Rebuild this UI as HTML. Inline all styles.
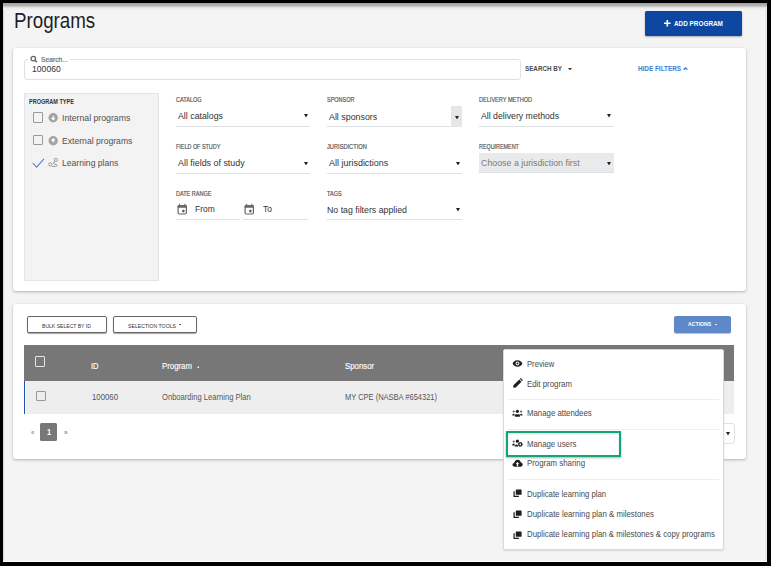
<!DOCTYPE html>
<html><head><meta charset="utf-8"><style>
html,body{margin:0;padding:0;}
body{width:771px;height:566px;background:#000;position:relative;overflow:hidden;font-family:"Liberation Sans",sans-serif;}
.t{position:absolute;white-space:nowrap;transform-origin:0 0;}
.b{position:absolute;display:block;}
</style></head><body>
<div class="b" style="left:3px;top:3px;width:764px;height:559px;background:linear-gradient(to bottom,#9c9c9c 0px,#acacac 1.5px,#b2b2b2 2.5px,#cacaca 3.5px,#e0e0e0 4.5px,#ececec 5.5px,#f1f1f1 6.5px,#f4f4f4 8px);"></div>
<div class="b" style="left:3px;top:10px;width:1px;height:551px;background:#dcdcdc;"></div>
<div class="b" style="left:4px;top:10px;width:1px;height:551px;background:#ececec;"></div>
<div class="b" style="left:765px;top:8px;width:2px;height:553px;background:#e9e9e9;"></div>
<div class="b" style="left:3px;top:561px;width:764px;height:1px;background:#fff;"></div>
<div class="t" style="left:14.00px;top:8.96px;font-size:22.97px;line-height:22.97px;color:#1e1e2a;transform:scaleX(0.816);">Programs</div>
<div class="b" style="left:645px;top:11px;width:97px;height:25px;background:#0d47a1;border-radius:1.5px;box-shadow:0 1px 2px rgba(0,0,0,.3);"></div>
<svg class="b" style="left:664.0px;top:20.1px;" width="6.6" height="6.6" viewBox="0 0 10 10" preserveAspectRatio="none"><path d="M5 0V10M0 5H10" stroke="#fff" stroke-width="2.5"/></svg>
<div class="t" style="left:674.40px;top:20.23px;font-size:7.99px;line-height:7.99px;color:#fff;font-weight:bold;transform:scaleX(0.799);">ADD PROGRAM</div>
<div class="b" style="left:13px;top:48px;width:733px;height:243px;background:#fff;border-radius:3px;box-shadow:0 1px 3px rgba(0,0,0,.28);"></div>
<div class="b" style="left:24px;top:58.5px;width:496.5px;height:21.0px;border:1px solid #dfe1e4;border-radius:3px;box-sizing:border-box;"></div>
<div class="b" style="left:27.5px;top:57px;width:42.5px;height:4px;background:#fff;"></div>
<svg class="b" style="left:25px;top:51.3px" width="14" height="14" viewBox="0 0 14 14"><circle cx="8.3" cy="7.6" r="2.3" fill="none" stroke="#666" stroke-width="1.3"/><path d="M9.9 9.3L11.8 11.2" stroke="#666" stroke-width="1.5"/></svg>
<div class="t" style="left:41.00px;top:56.97px;font-size:7.12px;line-height:7.12px;color:#666;transform:scaleX(0.947);-webkit-text-stroke:0.15px #666;">Search...</div>
<div class="t" style="left:31.60px;top:65.07px;font-size:9.01px;line-height:9.01px;color:#333;transform:scaleX(0.958);">100060</div>
<div class="t" style="left:525.00px;top:65.97px;font-size:7.12px;line-height:7.12px;color:#4a4a4a;font-weight:bold;transform:scaleX(0.882);">SEARCH BY</div>
<svg class="b" style="left:567.8px;top:67.5px;" width="4.0" height="2.7" viewBox="0 0 10 6" preserveAspectRatio="none"><path d="M0 0H10L5 6Z" fill="#444"/></svg>
<div class="t" style="left:638.00px;top:65.08px;font-size:7.70px;line-height:7.70px;color:#3d7bd6;font-weight:bold;transform:scaleX(0.828);">HIDE FILTERS</div>
<svg class="b" style="left:683px;top:66.6px;" width="5" height="3.2" viewBox="0 0 10 7" preserveAspectRatio="none"><path d="M1.3 5.8L5 2.2L8.7 5.8" fill="none" stroke="#3d7bd6" stroke-width="2.8"/></svg>
<div class="b" style="left:24px;top:93px;width:135px;height:187.8px;background:#f3f3f3;border:1px solid #e4e5e7;box-sizing:border-box;"></div>
<div class="t" style="left:29.00px;top:99.37px;font-size:7.12px;line-height:7.12px;color:#333;font-weight:bold;transform:scaleX(0.779);">PROGRAM TYPE</div>
<div class="b" style="left:33.2px;top:112.4px;width:10.0px;height:10.2px;border:1.2px solid #999;border-radius:1px;box-sizing:border-box;"></div>
<div class="b" style="left:33.2px;top:135.3px;width:10.0px;height:10.2px;border:1.2px solid #999;border-radius:1px;box-sizing:border-box;"></div>
<svg class="b" style="left:45px;top:110px" width="16" height="16" viewBox="0 0 16 16"><circle cx="8.2" cy="7.7" r="4.7" fill="#a3a3a3"/><path d="M8.2 5.8V9.2M6.6 7.9L8.2 9.6L9.8 7.9" fill="none" stroke="#fff" stroke-width="1.2"/></svg>
<svg class="b" style="left:45px;top:133px" width="16" height="16" viewBox="0 0 16 16"><circle cx="8.2" cy="7.7" r="4.7" fill="#a3a3a3"/><path d="M8.2 9.6V6.2M6.6 7.5L8.2 5.8L9.8 7.5" fill="none" stroke="#fff" stroke-width="1.2"/></svg>
<svg class="b" style="left:32.3px;top:158.2px;" width="12.7" height="10.0" viewBox="0 0 13 10" preserveAspectRatio="none"><path d="M0.7 5L4.7 9.2L12.3 0.8" fill="none" stroke="#5479cc" stroke-width="1.05"/></svg>
<svg class="b" style="left:45px;top:155px" width="16" height="16" viewBox="0 0 16 16"><circle cx="10.9" cy="4.9" r="1.6" fill="none" stroke="#999" stroke-width="1.0"/><circle cx="5.2" cy="9.4" r="1.6" fill="none" stroke="#999" stroke-width="1.0"/><path d="M10.2 6.6Q8 7.4 8.4 8.4Q8.8 9.1 11 9.4Q12.3 9.7 12.1 10.7Q11.8 11.4 10.6 11.4L6.9 11.4" fill="none" stroke="#999" stroke-width="1.0"/></svg>
<div class="t" style="left:61.90px;top:112.70px;font-size:9.45px;line-height:9.45px;color:#505050;transform:scaleX(0.924);">Internal programs</div>
<div class="t" style="left:61.90px;top:135.80px;font-size:9.45px;line-height:9.45px;color:#505050;transform:scaleX(0.913);">External programs</div>
<div class="t" style="left:61.90px;top:158.10px;font-size:9.45px;line-height:9.45px;color:#505050;transform:scaleX(0.910);">Learning plans</div>
<div class="t" style="left:175.80px;top:97.16px;font-size:6.54px;line-height:6.54px;color:#555;transform:scaleX(0.849);-webkit-text-stroke:0.18px #555;">CATALOG</div>
<div class="t" style="left:327.20px;top:97.16px;font-size:6.54px;line-height:6.54px;color:#555;transform:scaleX(0.838);-webkit-text-stroke:0.18px #555;">SPONSOR</div>
<div class="t" style="left:478.75px;top:97.16px;font-size:6.54px;line-height:6.54px;color:#555;transform:scaleX(0.854);-webkit-text-stroke:0.18px #555;">DELIVERY METHOD</div>
<div class="t" style="left:175.80px;top:144.16px;font-size:6.54px;line-height:6.54px;color:#555;transform:scaleX(0.831);-webkit-text-stroke:0.18px #555;">FIELD OF STUDY</div>
<div class="t" style="left:327.20px;top:144.16px;font-size:6.54px;line-height:6.54px;color:#555;transform:scaleX(0.871);-webkit-text-stroke:0.18px #555;">JURISDICTION</div>
<div class="t" style="left:478.75px;top:144.16px;font-size:6.54px;line-height:6.54px;color:#555;transform:scaleX(0.826);-webkit-text-stroke:0.18px #555;">REQUIREMENT</div>
<div class="t" style="left:175.80px;top:190.76px;font-size:6.54px;line-height:6.54px;color:#555;transform:scaleX(0.842);-webkit-text-stroke:0.18px #555;">DATE RANGE</div>
<div class="t" style="left:327.20px;top:190.76px;font-size:6.54px;line-height:6.54px;color:#555;transform:scaleX(0.843);-webkit-text-stroke:0.18px #555;">TAGS</div>
<div class="b" style="left:175.8px;top:126px;width:134.2px;height:1px;background:#dde1e6;"></div>
<div class="b" style="left:175.8px;top:172.6px;width:134.2px;height:1.0px;background:#dde1e6;"></div>
<div class="b" style="left:327px;top:126px;width:124.2px;height:1px;background:#dde1e6;"></div>
<div class="b" style="left:327px;top:172.6px;width:134.6px;height:1.0px;background:#dde1e6;"></div>
<div class="b" style="left:478.75px;top:126px;width:134.85px;height:1px;background:#dde1e6;"></div>
<div class="b" style="left:175.8px;top:218.8px;width:64.6px;height:1.0px;background:#dde1e6;"></div>
<div class="b" style="left:243px;top:218.8px;width:65px;height:1.0px;background:#dde1e6;"></div>
<div class="b" style="left:327px;top:218.8px;width:134.6px;height:1.0px;background:#dde1e6;"></div>
<div class="b" style="left:451.2px;top:106px;width:10.7px;height:20.8px;background:#e6e6e6;"></div>
<div class="b" style="left:478.75px;top:153.2px;width:135.25px;height:19.8px;background:#e9eaeb;border-bottom:1px solid #dde1e6;box-sizing:border-box;"></div>
<svg class="b" style="left:303.6px;top:114.1px;" width="4.0" height="3.5" viewBox="0 0 10 8" preserveAspectRatio="none"><path d="M0 0H10L5 8Z" fill="#222"/></svg>
<svg class="b" style="left:454.6px;top:115.6px;" width="4.0" height="3.5" viewBox="0 0 10 8" preserveAspectRatio="none"><path d="M0 0H10L5 8Z" fill="#222"/></svg>
<svg class="b" style="left:606.8px;top:114.1px;" width="4.0" height="3.5" viewBox="0 0 10 8" preserveAspectRatio="none"><path d="M0 0H10L5 8Z" fill="#222"/></svg>
<svg class="b" style="left:303.6px;top:161.5px;" width="4.0" height="3.5" viewBox="0 0 10 8" preserveAspectRatio="none"><path d="M0 0H10L5 8Z" fill="#222"/></svg>
<svg class="b" style="left:456.4px;top:161.5px;" width="4.0" height="3.5" viewBox="0 0 10 8" preserveAspectRatio="none"><path d="M0 0H10L5 8Z" fill="#222"/></svg>
<svg class="b" style="left:606.8px;top:161.6px;" width="4.0" height="3.5" viewBox="0 0 10 8" preserveAspectRatio="none"><path d="M0 0H10L5 8Z" fill="#222"/></svg>
<svg class="b" style="left:456px;top:208.2px;" width="4" height="3.5" viewBox="0 0 10 8" preserveAspectRatio="none"><path d="M0 0H10L5 8Z" fill="#222"/></svg>
<div class="t" style="left:177.80px;top:111.48px;font-size:9.59px;line-height:9.59px;color:#333;transform:scaleX(0.919);">All catalogs</div>
<div class="t" style="left:329.10px;top:112.48px;font-size:9.59px;line-height:9.59px;color:#333;transform:scaleX(0.924);">All sponsors</div>
<div class="t" style="left:480.70px;top:111.48px;font-size:9.59px;line-height:9.59px;color:#333;transform:scaleX(0.911);">All delivery methods</div>
<div class="t" style="left:177.80px;top:158.18px;font-size:9.59px;line-height:9.59px;color:#333;transform:scaleX(0.927);">All fields of study</div>
<div class="t" style="left:329.10px;top:158.18px;font-size:9.59px;line-height:9.59px;color:#333;transform:scaleX(0.936);">All jurisdictions</div>
<div class="t" style="left:480.70px;top:158.18px;font-size:9.59px;line-height:9.59px;color:#7a7a7a;transform:scaleX(0.922);">Choose a jurisdiction first</div>
<div class="t" style="left:195.30px;top:205.13px;font-size:9.30px;line-height:9.30px;color:#333;transform:scaleX(0.908);">From</div>
<div class="t" style="left:263.00px;top:205.13px;font-size:9.30px;line-height:9.30px;color:#333;transform:scaleX(0.916);">To</div>
<div class="t" style="left:327.20px;top:204.88px;font-size:9.59px;line-height:9.59px;color:#333;transform:scaleX(0.915);">No tag filters applied</div>
<svg class="b" style="left:174px;top:200px" width="18" height="18" viewBox="0 0 18 18"><rect x="4.1" y="5.9" width="8.3" height="8.1" rx="1.2" fill="none" stroke="#666" stroke-width="1.2"/><rect x="3.5" y="5.3" width="9.5" height="2.4" rx="0.8" fill="#666"/><rect x="5" y="3.8" width="1.1" height="2" fill="#666"/><rect x="10.3" y="3.8" width="1.1" height="2" fill="#666"/><circle cx="9.4" cy="11.1" r="1.3" fill="#555"/></svg>
<svg class="b" style="left:240.8px;top:200px" width="18" height="18" viewBox="0 0 18 18"><rect x="4.1" y="5.9" width="8.3" height="8.1" rx="1.2" fill="none" stroke="#666" stroke-width="1.2"/><rect x="3.5" y="5.3" width="9.5" height="2.4" rx="0.8" fill="#666"/><rect x="5" y="3.8" width="1.1" height="2" fill="#666"/><rect x="10.3" y="3.8" width="1.1" height="2" fill="#666"/><circle cx="9.4" cy="11.1" r="1.3" fill="#555"/></svg>
<div class="b" style="left:13px;top:304.2px;width:733px;height:154.8px;background:#fff;border-radius:3px;box-shadow:0 1px 3px rgba(0,0,0,.28);"></div>
<div class="b" style="left:27.2px;top:316px;width:79.4px;height:17px;border:1px solid #666;border-radius:2px;box-sizing:border-box;box-shadow:0 1px 1px rgba(0,0,0,.35);background:#fff;"></div>
<div class="b" style="left:112.6px;top:316px;width:84.4px;height:17px;border:1px solid #666;border-radius:2px;box-sizing:border-box;box-shadow:0 1px 1px rgba(0,0,0,.35);background:#fff;"></div>
<div class="t" style="left:42.20px;top:322.73px;font-size:6.10px;line-height:6.10px;color:#333;transform:scaleX(0.833);">BULK SELECT BY ID</div>
<div class="t" style="left:127.70px;top:322.73px;font-size:6.10px;line-height:6.10px;color:#333;transform:scaleX(0.846);">SELECTION TOOLS</div>
<svg class="b" style="left:178.7px;top:323.6px;" width="2.8" height="1.6" viewBox="0 0 10 6" preserveAspectRatio="none"><path d="M0 0H10L5 6Z" fill="#333"/></svg>
<div class="b" style="left:674px;top:316px;width:57px;height:17px;background:#5f88c8;border-radius:2px;box-shadow:0 1px 1px rgba(0,0,0,.25);"></div>
<div class="t" style="left:687.90px;top:322.16px;font-size:5.96px;line-height:5.96px;color:#fff;font-weight:bold;transform:scaleX(0.869);">ACTIONS</div>
<svg class="b" style="left:714.9px;top:324px;" width="2.4" height="1.6" viewBox="0 0 10 6" preserveAspectRatio="none"><path d="M0 0H10L5 6Z" fill="#fff"/></svg>
<div class="b" style="left:24px;top:345.4px;width:710px;height:35.6px;background:#777;"></div>
<div class="b" style="left:24px;top:381px;width:710px;height:32.6px;background:#eeeeee;"></div>
<div class="b" style="left:24px;top:381px;width:1.3px;height:32.6px;background:#1f4fb0;"></div>
<div class="b" style="left:25.3px;top:381px;width:1.0px;height:32.6px;background:#fafafa;"></div>
<div class="b" style="left:34.5px;top:356px;width:10.3px;height:10.7px;border:1.3px solid #e6e6e6;border-radius:1px;box-sizing:border-box;"></div>
<div class="b" style="left:35.8px;top:391.4px;width:10.2px;height:10.0px;border:1.2px solid #9a9a9a;border-radius:1px;box-sizing:border-box;"></div>
<div class="t" style="left:91.40px;top:360.60px;font-size:9.45px;line-height:9.45px;color:#fff;transform:scaleX(0.804);-webkit-text-stroke:0.15px #fff;">ID</div>
<div class="t" style="left:162.00px;top:360.60px;font-size:9.45px;line-height:9.45px;color:#fff;transform:scaleX(0.828);-webkit-text-stroke:0.15px #fff;">Program</div>
<svg class="b" style="left:196.5px;top:365.7px;" width="2.8" height="2.3" viewBox="0 0 10 8" preserveAspectRatio="none"><path d="M0 8H10L5 0Z" fill="#fff"/></svg>
<div class="t" style="left:344.50px;top:360.60px;font-size:9.45px;line-height:9.45px;color:#fff;transform:scaleX(0.827);-webkit-text-stroke:0.15px #fff;">Sponsor</div>
<div class="t" style="left:91.70px;top:392.18px;font-size:9.59px;line-height:9.59px;color:#555;transform:scaleX(0.815);">100060</div>
<div class="t" style="left:162.20px;top:392.18px;font-size:9.59px;line-height:9.59px;color:#555;transform:scaleX(0.793);">Onboarding Learning Plan</div>
<div class="t" style="left:344.80px;top:392.18px;font-size:9.59px;line-height:9.59px;color:#555;transform:scaleX(0.783);">MY CPE (NASBA #654321)</div>
<div class="t" style="left:30.70px;top:429.64px;font-size:6.69px;line-height:6.69px;color:#8797ad;font-weight:bold;transform:scaleX(0.888);">«</div>
<div class="b" style="left:40.4px;top:423px;width:16.6px;height:17.7px;background:#777;border-radius:1.5px;"></div>
<div class="t" style="left:46.80px;top:427.93px;font-size:9.30px;line-height:9.30px;color:#fff;font-weight:bold;transform:scaleX(0.793);">1</div>
<div class="t" style="left:64.00px;top:429.64px;font-size:6.69px;line-height:6.69px;color:#8797ad;font-weight:bold;transform:scaleX(0.995);">»</div>
<div class="b" style="left:690px;top:422.6px;width:44.9px;height:21.3px;border:1px solid #dde0e4;border-radius:3px;box-sizing:border-box;background:#fff;"></div>
<svg class="b" style="left:726px;top:432px;" width="4" height="3.5" viewBox="0 0 10 8" preserveAspectRatio="none"><path d="M0 0H10L5 8Z" fill="#222"/></svg>
<div class="b" style="left:503.1px;top:349.2px;width:221.1px;height:200.4px;background:#fff;border:1px solid #dadada;border-radius:2px;box-sizing:border-box;box-shadow:0 1px 2px rgba(0,0,0,.12);"></div>
<div class="b" style="left:507.7px;top:399px;width:211.0px;height:1px;background:#eceef0;"></div>
<div class="b" style="left:507.7px;top:428.5px;width:211.0px;height:1.0px;background:#eceef0;"></div>
<div class="b" style="left:507.7px;top:478.8px;width:211.0px;height:1.0px;background:#eceef0;"></div>
<div class="t" style="left:526.80px;top:359.63px;font-size:9.30px;line-height:9.30px;color:#4a4a4a;transform:scaleX(0.824);">Preview</div>
<div class="t" style="left:526.80px;top:380.33px;font-size:9.30px;line-height:9.30px;color:#4a4a4a;transform:scaleX(0.845);">Edit program</div>
<div class="t" style="left:526.80px;top:409.23px;font-size:9.30px;line-height:9.30px;color:#4a4a4a;transform:scaleX(0.840);">Manage attendees</div>
<div class="t" style="left:526.80px;top:439.83px;font-size:9.30px;line-height:9.30px;color:#4a4a4a;transform:scaleX(0.838);">Manage users</div>
<div class="t" style="left:526.80px;top:459.23px;font-size:9.30px;line-height:9.30px;color:#4a4a4a;transform:scaleX(0.845);">Program sharing</div>
<div class="t" style="left:526.80px;top:489.73px;font-size:9.30px;line-height:9.30px;color:#4a4a4a;transform:scaleX(0.837);">Duplicate learning plan</div>
<div class="t" style="left:526.80px;top:509.93px;font-size:9.30px;line-height:9.30px;color:#4a4a4a;transform:scaleX(0.844);">Duplicate learning plan &amp; milestones</div>
<div class="t" style="left:526.80px;top:530.33px;font-size:9.30px;line-height:9.30px;color:#4a4a4a;transform:scaleX(0.842);">Duplicate learning plan &amp; milestones &amp; copy programs</div>
<svg class="b" style="left:509px;top:356px" width="18" height="18" viewBox="0 0 18 18"><path d="M8.5 4.2C6 4.2 4.3 5.8 3.6 7.5C4.3 9.2 6 10.8 8.5 10.8C11 10.8 12.7 9.2 13.4 7.5C12.7 5.8 11 4.2 8.5 4.2Z" fill="#1e1e1e"/><circle cx="8.5" cy="7.5" r="1.9" fill="#fff"/><circle cx="8.5" cy="7.5" r="1" fill="#1e1e1e"/></svg>
<svg class="b" style="left:509px;top:376px" width="18" height="18" viewBox="0 0 18 18"><path d="M4.2 11.8L4.5 9.3L10.3 3.5L12.5 5.7L6.7 11.5Z" fill="#1e1e1e"/><path d="M10.9 2.9L11.7 2.1L13.9 4.3L13.1 5.1Z" fill="#1e1e1e"/></svg>
<svg class="b" style="left:509px;top:404px" width="18" height="18" viewBox="0 0 18 18"><circle cx="8.4" cy="7.3" r="1.6" fill="#1e1e1e"/><path d="M5.9 12.7V11.2Q5.9 10.2 7 10.2H9.8Q10.9 10.2 10.9 11.2V12.7Z" fill="#1e1e1e"/><circle cx="4.7" cy="7.6" r="1.1" fill="#666"/><circle cx="12.1" cy="7.6" r="1.1" fill="#666"/><path d="M3.2 11.6Q3.2 9.7 4.6 9.7Q5.6 9.7 5.6 10.6V11.6Z M13.6 11.6Q13.6 9.7 12.2 9.7Q11.2 9.7 11.2 10.6V11.6Z" fill="#1e1e1e"/></svg>
<svg class="b" style="left:509px;top:434px" width="18" height="18" viewBox="0 0 18 18"><circle cx="8.4" cy="7.2" r="1.6" fill="#1e1e1e"/><path d="M5.6 12.6Q5.6 10.4 7.3 10.4Q8.6 10.4 9 11.4V12.6Z" fill="#1e1e1e"/><circle cx="4.7" cy="7.6" r="1.1" fill="#666"/><path d="M3.2 11.4Q3.2 9.6 4.5 9.6Q5.3 9.6 5.6 10.2V11.4Z" fill="#1e1e1e"/><circle cx="11.3" cy="10.4" r="1.5" fill="none" stroke="#1e1e1e" stroke-width="1.3"/><circle cx="11.3" cy="10.4" r="2.1" fill="none" stroke="#1e1e1e" stroke-width="0.7" stroke-dasharray="0.9 0.75"/></svg>
<svg class="b" style="left:509px;top:454px" width="18" height="18" viewBox="0 0 18 18"><path d="M5.6 12.7C4.3 12.7 3.5 11.8 3.5 10.8C3.5 9.8 4.2 9.1 5.1 9C5.5 7.1 6.8 5.8 8.6 5.8C10.3 5.8 11.6 7 11.9 8.5C13 8.6 13.7 9.5 13.7 10.6C13.7 11.8 12.8 12.7 11.7 12.7Z" fill="#1e1e1e"/><path d="M8.5 8L10.3 9.9H9.2V12.2H7.8V9.9H6.7Z" fill="#fff"/></svg>
<svg class="b" style="left:509px;top:484px" width="18" height="18" viewBox="0 0 18 18"><rect x="6.8" y="5.4" width="5.8" height="5.3" rx="0.5" fill="#1e1e1e"/><path d="M4.5 7.3H5.7V11.8H9.9V13H4.5Z" fill="#1e1e1e"/></svg>
<svg class="b" style="left:509px;top:505px" width="18" height="18" viewBox="0 0 18 18"><rect x="6.8" y="5.4" width="5.8" height="5.3" rx="0.5" fill="#1e1e1e"/><path d="M4.5 7.3H5.7V11.8H9.9V13H4.5Z" fill="#1e1e1e"/></svg>
<svg class="b" style="left:509px;top:525.5px" width="18" height="18" viewBox="0 0 18 18"><rect x="6.8" y="5.4" width="5.8" height="5.3" rx="0.5" fill="#1e1e1e"/><path d="M4.5 7.3H5.7V11.8H9.9V13H4.5Z" fill="#1e1e1e"/></svg>
<div class="b" style="left:505.9px;top:431.3px;width:114.9px;height:25.3px;border:2.3px solid #12a57b;box-sizing:border-box;box-shadow:0 1px 2px rgba(0,0,0,.3), inset 0 1px 2px rgba(120,60,80,.18);"></div>
</body></html>
